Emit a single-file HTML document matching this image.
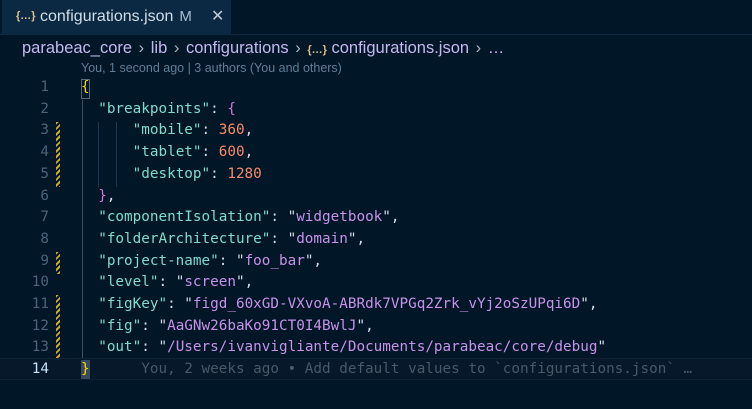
<!DOCTYPE html>
<html><head><meta charset="utf-8"><style>
*{margin:0;padding:0;box-sizing:border-box}
body{width:752px;height:409px;background:#011627;overflow:hidden;position:relative;font-family:"Liberation Sans",sans-serif}
.tabbar{position:absolute;left:0;top:0;width:752px;height:35px;background:#011627;border-bottom:1px solid #102a44}
.tab{position:absolute;left:2px;top:0;width:229px;height:35px;background:#0b2942;color:#d2dee7;font-size:16px;line-height:33px;padding-left:38px}
.tab .ic{position:absolute;left:14px;top:0;color:#e2c08d;font-size:11px;font-weight:bold}
.tab .m{color:#a9bdd0;font-size:15px;margin-left:6px}
.tab .x{position:absolute;left:209px;top:0;color:#c0cad5;font-size:16px}
.bc{position:absolute;left:22px;top:38px;color:#c5b8f0;font-size:16.5px;line-height:20px;white-space:nowrap}
.bc .s{color:#a9b4c7;margin:0 2px}
.bc .ic{color:#e2c08d;font-size:11px;font-weight:bold}
.lens{position:absolute;left:81px;top:61px;font-size:12.5px;color:#5f7e97}
.code{position:absolute;left:0;top:77px;font-family:"DejaVu Sans Mono",monospace;font-size:14.3px}
.ln{position:absolute;left:0;width:49px;text-align:right;color:#4b6479;height:21.7px;line-height:21.7px}
.tx{position:absolute;left:81px;white-space:pre;height:21.7px;line-height:21.7px;color:#d6deeb}
.k{color:#7fdbca}.s2{color:#c792ea}.n{color:#f78c6c}.b{color:#da70d6}.y{color:#ffd700}
.st{position:absolute;left:56px;width:4px;background:repeating-linear-gradient(135deg,#d4a82a 0 2px,#011627 2px 4px)}
.g{position:absolute;width:1px;background:#2a3a4c}
</style></head><body>
<div class="tabbar"><div class="tab"><span class="ic">{…}</span>configurations.json<span class="m">M</span><span class="x">✕</span></div></div>
<div class="bc">parabeac_core<span class="s"> › </span>lib<span class="s"> › </span>configurations<span class="s"> › </span><span class="ic">{…}</span> configurations.json<span class="s"> › </span>…</div>
<div class="lens">You, 1 second ago | 3 authors (You and others)</div>
<div style="position:absolute;left:0;top:358px;width:752px;height:22px;background:#06182a;border-top:1px solid #0d2236;border-bottom:1px solid #0d2236"></div>
<div class="g" style="left:82px;top:100px;height:258px;background:#3b4d5e"></div>
<div class="g" style="left:98px;top:122px;height:65px;background:#1f3552"></div>
<div class="g" style="left:116px;top:122px;height:65px;background:#1f3552"></div>
<div class="st" style="top:122px;height:65px"></div>
<div class="st" style="top:252px;height:22px"></div>
<div class="st" style="top:295px;height:63px"></div>
<div style="position:absolute;left:81px;top:79px;width:9px;height:20px;border:1px solid #5a6a7a"></div>
<div style="position:absolute;left:81px;top:360px;width:9px;height:19px;background:#5a6e82;opacity:.6"></div>
<div class="code">
<div class="ln" style="top:0">1</div><div class="tx" style="top:0"><span class="y">{</span></div>
<div class="ln" style="top:21.7px">2</div><div class="tx" style="top:21.7px">  <span class="k">"breakpoints"</span>: <span class="b">{</span></div>
<div class="ln" style="top:43.4px">3</div><div class="tx" style="top:43.4px">      <span class="k">"mobile"</span>: <span class="n">360</span>,</div>
<div class="ln" style="top:65.1px">4</div><div class="tx" style="top:65.1px">      <span class="k">"tablet"</span>: <span class="n">600</span>,</div>
<div class="ln" style="top:86.8px">5</div><div class="tx" style="top:86.8px">      <span class="k">"desktop"</span>: <span class="n">1280</span></div>
<div class="ln" style="top:108.5px">6</div><div class="tx" style="top:108.5px">  <span class="b">}</span>,</div>
<div class="ln" style="top:130.2px">7</div><div class="tx" style="top:130.2px">  <span class="k">"componentIsolation"</span>: "<span class="s2">widgetbook</span>",</div>
<div class="ln" style="top:151.9px">8</div><div class="tx" style="top:151.9px">  <span class="k">"folderArchitecture"</span>: "<span class="s2">domain</span>",</div>
<div class="ln" style="top:173.6px">9</div><div class="tx" style="top:173.6px">  <span class="k">"project-name"</span>: "<span class="s2">foo_bar</span>",</div>
<div class="ln" style="top:195.3px">10</div><div class="tx" style="top:195.3px">  <span class="k">"level"</span>: "<span class="s2">screen</span>",</div>
<div class="ln" style="top:217px">11</div><div class="tx" style="top:217px">  <span class="k">"figKey"</span>: "<span class="s2">figd_60xGD-VXvoA-ABRdk7VPGq2Zrk_vYj2oSzUPqi6D</span>",</div>
<div class="ln" style="top:238.7px">12</div><div class="tx" style="top:238.7px">  <span class="k">"fig"</span>: "<span class="s2">AaGNw26baKo91CT0I4BwlJ</span>",</div>
<div class="ln" style="top:260.4px">13</div><div class="tx" style="top:260.4px">  <span class="k">"out"</span>: "<span class="s2">/Users/ivanvigliante/Documents/parabeac/core/debug</span>"</div>
<div class="ln" style="top:282.1px;color:#c5e4fd">14</div><div class="tx" style="top:282.1px"><span class="y">}</span>      <span style="color:#4a5868">You, 2 weeks ago • Add default values to `configurations.json` …</span></div>
</div>
</body></html>
